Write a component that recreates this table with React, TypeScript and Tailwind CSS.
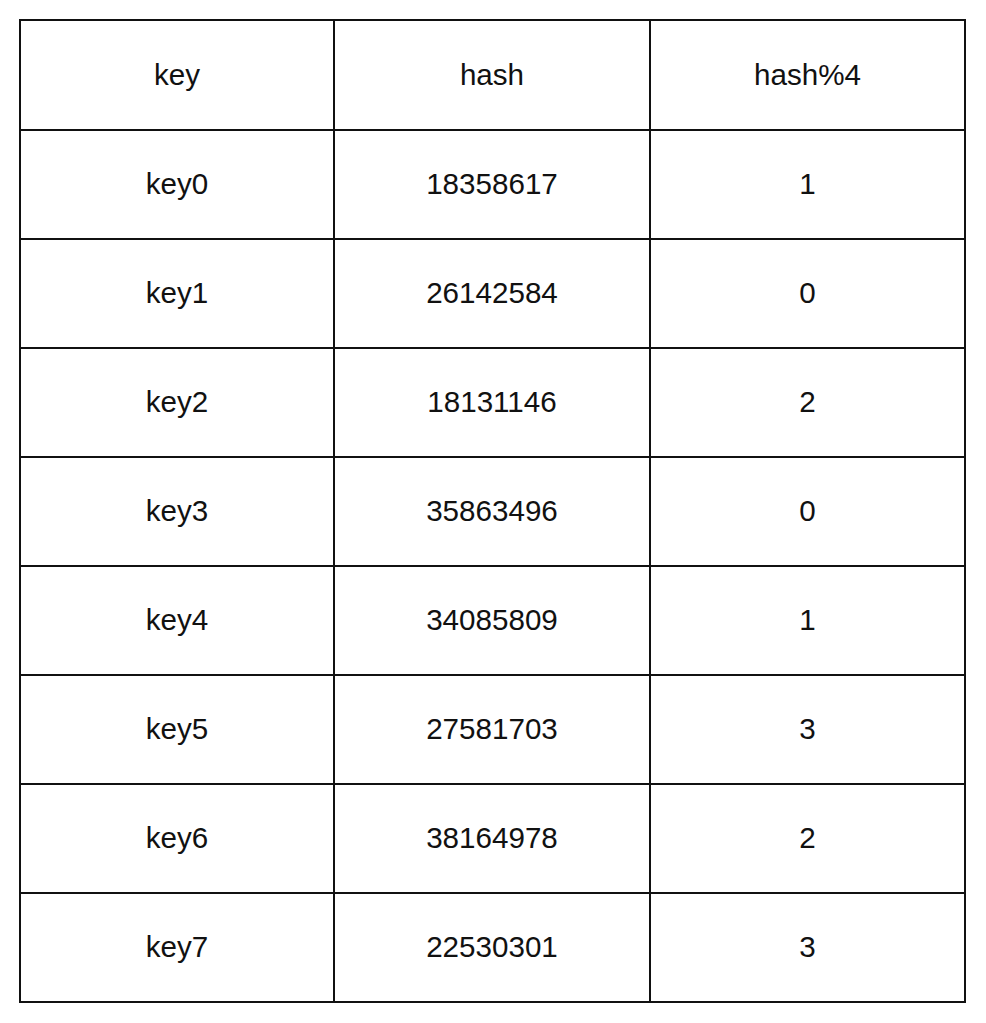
import React from 'react';

const rows: [string, string, string][] = [
  ['key0', '18358617', '1'],
  ['key1', '26142584', '0'],
  ['key2', '18131146', '2'],
  ['key3', '35863496', '0'],
  ['key4', '34085809', '1'],
  ['key5', '27581703', '3'],
  ['key6', '38164978', '2'],
  ['key7', '22530301', '3'],
];

export default function App() {
  const cell = 'border-2 border-[#111] text-center align-middle';
  return (
    <div className="w-[986px] h-[1023px] bg-white pt-[19px] pl-[19px] font-['Liberation_Sans',Arial,sans-serif] text-[29.6px] text-[#111]">
      <table className="border-collapse table-fixed w-[945px]">
        <colgroup>
          <col className="w-[314px]" />
          <col className="w-[316px]" />
          <col className="w-[315px]" />
        </colgroup>
        <thead>
          <tr className="h-[110px]">
            <th className={`${cell} font-normal`}>key</th>
            <th className={`${cell} font-normal`}>hash</th>
            <th className={`${cell} font-normal`}>hash%4</th>
          </tr>
        </thead>
        <tbody>
          {rows.map(([k, h, m]) => (
            <tr key={k} className="h-[109px]">
              <td className={cell}>{k}</td>
              <td className={cell}>{h}</td>
              <td className={cell}>{m}</td>
            </tr>
          ))}
        </tbody>
      </table>
    </div>
  );
}
